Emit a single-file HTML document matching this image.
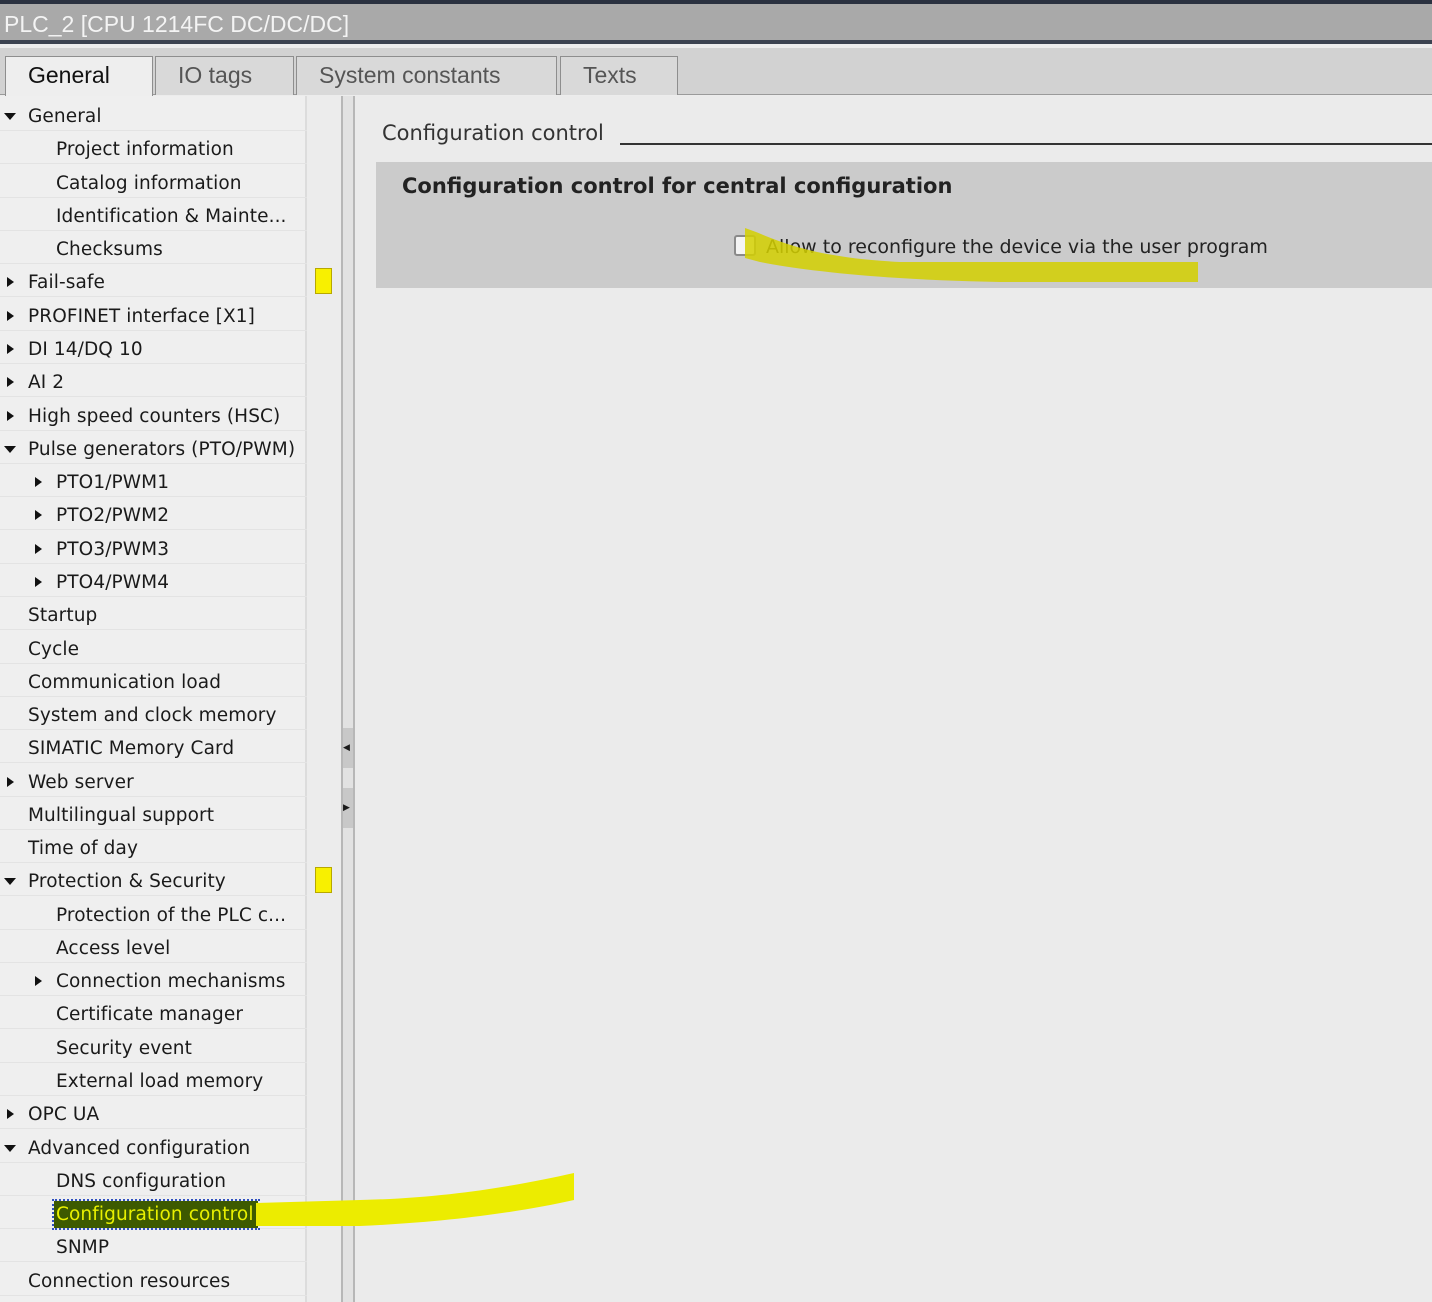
<!DOCTYPE html>
<html><head><style>
*{margin:0;padding:0;box-sizing:border-box}
body{width:1432px;height:1302px;overflow:hidden;background:#ececec;font-family:"DejaVu Sans","Liberation Sans",sans-serif;position:relative;color:#1a1a1a}
.top{position:absolute;left:0;top:0;width:1432px;height:4px;background:#2a3140}
.title{position:absolute;left:0;top:4px;width:1432px;height:40px;background:#a9a9a9;color:#f4f4f4;font-family:"Liberation Sans",sans-serif;font-size:23px;line-height:40px;padding-left:4px;border-bottom:4px solid #3b4250}
.tabbar{position:absolute;left:0;top:48px;width:1432px;height:47px;background:#d2d2d2;border-bottom:1px solid #9a9a9a}
.tab{position:absolute;top:8px;height:39px;border:1px solid #8e8e8e;border-bottom:none;background:#d9d9d9;font-family:"Liberation Sans",sans-serif;font-size:23px;line-height:36px;color:#555;padding-left:22px}
.tab.act{background:#eeeeee;color:#111;height:40px}
.left{position:absolute;left:0;top:96px;width:307px;height:1206px;background:#efefef;border-right:2px solid #dcdcdc}
.row{position:absolute;left:0;width:307px;height:33px;border-bottom:1px solid #e3e3e3;font-size:18.5px;line-height:38px;white-space:nowrap;letter-spacing:0.1px}
.r{position:absolute;top:13px;left:7px;width:0;height:0;border-top:5px solid transparent;border-bottom:5px solid transparent;border-left:7px solid #111}
.d{position:absolute;top:15px;left:4px;width:0;height:0;border-left:6px solid transparent;border-right:6px solid transparent;border-top:7px solid #111}
.split{position:absolute;left:341px;top:96px;width:14px;height:1206px;background:#e2e2e2;border-left:2px solid #b7b7b7;border-right:2px solid #b7b7b7}
.right{position:absolute;left:355px;top:96px;width:1077px;height:1206px;background:#ebebeb}
.ylw{position:absolute;width:17px;height:26px;background:#f8f000;border:1px solid #b8a800}
</style></head><body>
<div class="top"></div>
<div class="title">PLC_2 [CPU 1214FC DC/DC/DC]</div>
<div class="tabbar">
<div class="tab act" style="left:5px;width:148px">General</div>
<div class="tab" style="left:155px;width:139px">IO tags</div>
<div class="tab" style="left:296px;width:261px">System constants</div>
<div class="tab" style="left:560px;width:118px">Texts</div>
</div>
<div class="left">
<div class="row" style="top:2px"><span class="d"></span><span style="position:absolute;left:28px">General</span></div>
<div class="row" style="top:35px"><span style="position:absolute;left:56px">Project information</span></div>
<div class="row" style="top:69px"><span style="position:absolute;left:56px">Catalog information</span></div>
<div class="row" style="top:102px"><span style="position:absolute;left:56px">Identification &amp; Mainte...</span></div>
<div class="row" style="top:135px"><span style="position:absolute;left:56px">Checksums</span></div>
<div class="row" style="top:168px"><span class="r"></span><span style="position:absolute;left:28px">Fail-safe</span></div>
<div class="row" style="top:202px"><span class="r"></span><span style="position:absolute;left:28px">PROFINET interface [X1]</span></div>
<div class="row" style="top:235px"><span class="r"></span><span style="position:absolute;left:28px">DI 14/DQ 10</span></div>
<div class="row" style="top:268px"><span class="r"></span><span style="position:absolute;left:28px">AI 2</span></div>
<div class="row" style="top:302px"><span class="r"></span><span style="position:absolute;left:28px">High speed counters (HSC)</span></div>
<div class="row" style="top:335px"><span class="d"></span><span style="position:absolute;left:28px">Pulse generators (PTO/PWM)</span></div>
<div class="row" style="top:368px"><span class="r" style="left:35px"></span><span style="position:absolute;left:56px">PTO1/PWM1</span></div>
<div class="row" style="top:401px"><span class="r" style="left:35px"></span><span style="position:absolute;left:56px">PTO2/PWM2</span></div>
<div class="row" style="top:435px"><span class="r" style="left:35px"></span><span style="position:absolute;left:56px">PTO3/PWM3</span></div>
<div class="row" style="top:468px"><span class="r" style="left:35px"></span><span style="position:absolute;left:56px">PTO4/PWM4</span></div>
<div class="row" style="top:501px"><span style="position:absolute;left:28px">Startup</span></div>
<div class="row" style="top:535px"><span style="position:absolute;left:28px">Cycle</span></div>
<div class="row" style="top:568px"><span style="position:absolute;left:28px">Communication load</span></div>
<div class="row" style="top:601px"><span style="position:absolute;left:28px">System and clock memory</span></div>
<div class="row" style="top:634px"><span style="position:absolute;left:28px">SIMATIC Memory Card</span></div>
<div class="row" style="top:668px"><span class="r"></span><span style="position:absolute;left:28px">Web server</span></div>
<div class="row" style="top:701px"><span style="position:absolute;left:28px">Multilingual support</span></div>
<div class="row" style="top:734px"><span style="position:absolute;left:28px">Time of day</span></div>
<div class="row" style="top:767px"><span class="d"></span><span style="position:absolute;left:28px">Protection &amp; Security</span></div>
<div class="row" style="top:801px"><span style="position:absolute;left:56px">Protection of the PLC c...</span></div>
<div class="row" style="top:834px"><span style="position:absolute;left:56px">Access level</span></div>
<div class="row" style="top:867px"><span class="r" style="left:35px"></span><span style="position:absolute;left:56px">Connection mechanisms</span></div>
<div class="row" style="top:900px"><span style="position:absolute;left:56px">Certificate manager</span></div>
<div class="row" style="top:934px"><span style="position:absolute;left:56px">Security event</span></div>
<div class="row" style="top:967px"><span style="position:absolute;left:56px">External load memory</span></div>
<div class="row" style="top:1000px"><span class="r"></span><span style="position:absolute;left:28px">OPC UA</span></div>
<div class="row" style="top:1034px"><span class="d"></span><span style="position:absolute;left:28px">Advanced configuration</span></div>
<div class="row" style="top:1067px"><span style="position:absolute;left:56px">DNS configuration</span></div>
<div class="row" style="top:1100px"><span style="position:absolute;left:54px;top:5px;height:27px;line-height:28px;padding:0 4px 0 2px;background:#3d5a00;color:#e8f000;outline:2px dotted #3050c0">Configuration control</span></div>
<div class="row" style="top:1133px"><span style="position:absolute;left:56px">SNMP</span></div>
<div class="row" style="top:1167px"><span style="position:absolute;left:28px">Connection resources</span></div>
</div>
<div class="ylw" style="left:315px;top:268px"></div>
<div class="ylw" style="left:315px;top:867px"></div>
<div class="split"><div style="position:absolute;left:0;top:632px;width:10px;height:40px;background:#c8c8c8;font-size:9px;line-height:40px">◀</div><div style="position:absolute;left:0;top:692px;width:10px;height:40px;background:#c8c8c8;font-size:9px;line-height:40px">▶</div></div>
<div class="right">
<div style="position:absolute;left:27px;top:25px;font-size:21px;color:#333">Configuration control</div>
<div style="position:absolute;left:265px;top:47px;width:812px;height:2px;background:#333"></div>
<div style="position:absolute;left:21px;top:66px;width:1056px;height:126px;background:#cbcbcb">
<div style="position:absolute;left:26px;top:12px;font-size:21px;font-weight:bold;color:#222">Configuration control for central configuration</div>
<div style="position:absolute;left:358px;top:73px;width:22px;height:21px;border:2px solid #8a8a8a;border-radius:3px;background:#f4f4f4"></div>
<div style="position:absolute;left:390px;top:74px;font-size:19px;color:#222">Allow to reconfigure the device via the user program</div>
</div>
</div>
<svg style="position:absolute;left:0;top:0" width="1432" height="1302">
<path d="M745 228 L756 232 C785 244 820 258 900 262 L1198 262 L1198 282 L1000 282 C880 280 800 270 760 262 L745 258 Z" fill="#d4d000" opacity="0.85"/>
<path d="M256 1203 L360 1200 C450 1198 520 1185 574 1173 L574 1200 C520 1212 450 1222 360 1226 L256 1226 Z" fill="#ecec00"/>
</svg>
</body></html>
